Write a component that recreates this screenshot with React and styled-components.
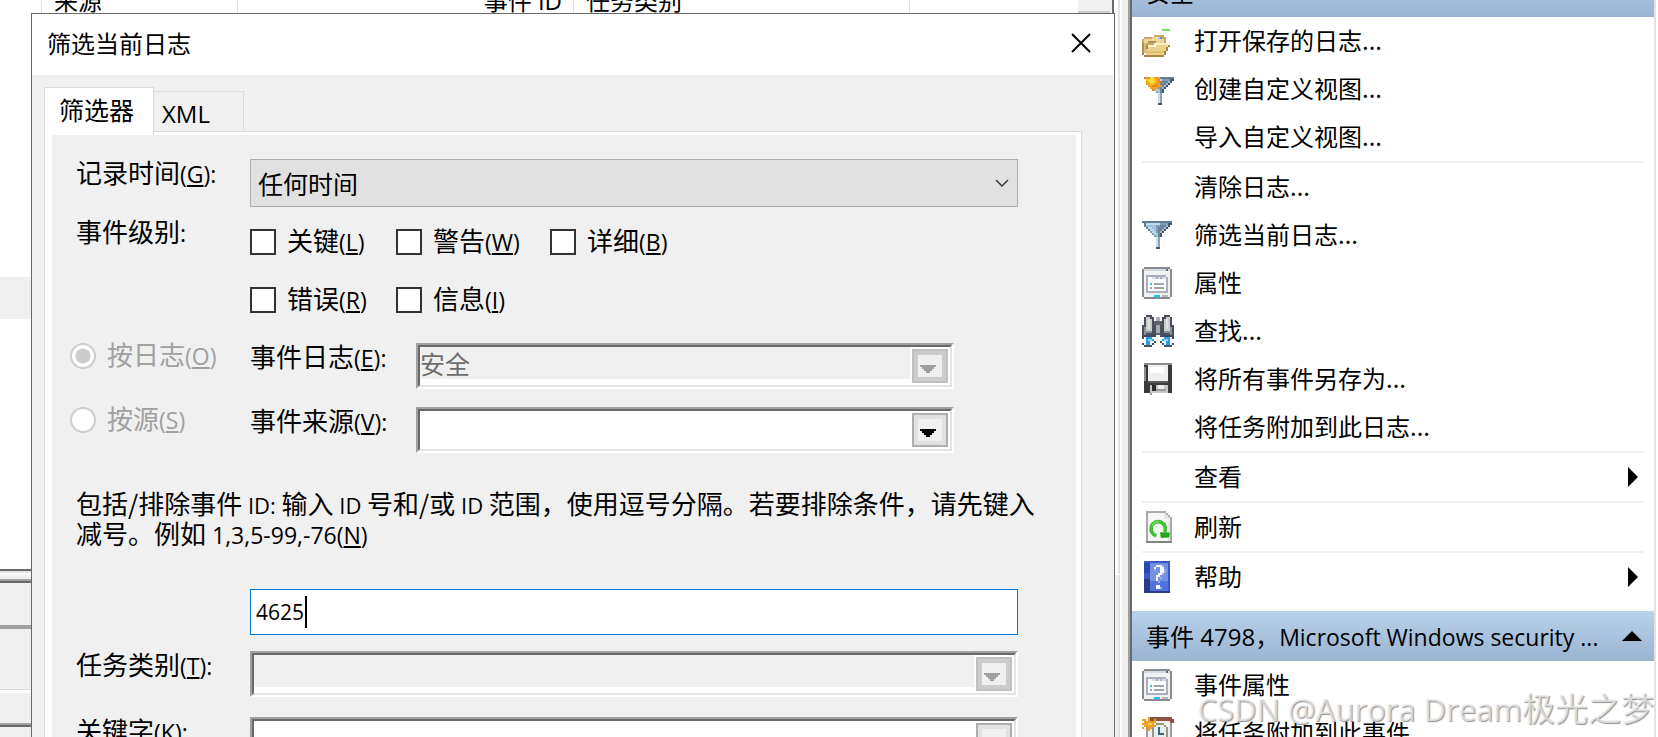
import React from "react";
import styled, { createGlobalStyle, css } from "styled-components";

const GlobalStyle = createGlobalStyle`
  * { box-sizing: border-box; }
  body {
    margin: 0;
    background: #f0f0f0;
    color: #000;
    font-family: "Noto Sans CJK SC", "Open Sans", sans-serif;
    font-size: 24px;
    line-height: 30px;
  }
  button, input, select { font: inherit; color: inherit; border-radius: 0; }
`;

/* ---------- desktop ---------- */

const Desktop = styled.div`
  position: relative;
  display: flex;
  height: 100vh;
  overflow: hidden;
`;

const MainPane = styled.main`
  position: relative;
  flex: 1;
  min-width: 0;
  display: flex;
  flex-direction: column;
  border-right: 2px solid #fff;
`;

const ListPane = styled.section`
  flex: 1;
  min-height: 0;
  overflow: hidden;
  display: flex;
  background: #fff;
  border-right: 2px solid #e3e3e3;
  border-bottom: 2px solid #fff;
`;

const ListFrame = styled.div`
  flex: 1;
  min-width: 0;
  display: flex;
  margin-right: 4px;
  overflow: hidden;
  border-right: 2px solid #696969;
  border-bottom: 2px solid #696969;
  box-shadow: 0 2px 0 #e3e3e3;
  margin-bottom: 2px;
`;

const ListBody = styled.div`
  flex: 1;
  min-width: 0;
`;

const ListHeader = styled.div`
  display: flex;
  height: 44px;
  margin-top: -19px;
`;

const HeaderCell = styled.div`
  width: ${(p) => p.$width}px;
  height: 44px;
  line-height: 37px;
  padding: 0 11px 0 12px;
  border-right: 1px solid #e0e0e0;
  text-align: ${(p) => p.$align || "left"};
  white-space: nowrap;
`;

const ListRow = styled.div`
  height: 42px;
  background: ${(p) => (p.$selected ? "#f0f0f0" : "#fff")};
`;

const ListScroll = styled.div`
  width: 34px;
  padding: 11px 2px 0 0;
  background: #f0f0f0;
`;

const ListThumb = styled.div`
  height: 160px;
  background: #cdcdcd;
`;

const DetailPane = styled.section`
  flex: 0 0 162px;
  overflow: hidden;
  padding: 4px 3px 0 0;
  background: #f0f0f0;
  border-right: 2px solid #e3e3e3;
`;

const DetailHeader = styled.div`
  height: 50px;
  border-top: 2px solid #a0a0a0;
  border-bottom: 4px solid #a0a0a0;
  box-shadow: inset 0 2px 0 #696969;
`;

const DetailTabs = styled.div`
  height: 64px;
  margin-bottom: 30px;
  border-bottom: 3px solid #fff;
  box-shadow: inset 0 -1px 0 #dcdcdc;
`;

const DetailBody = styled.div`
  height: 60px;
  border-top: 2px solid #a0a0a0;
  box-shadow: inset 0 2px 0 #696969;
`;

/* ---------- dialog ---------- */

const Dialog = styled.section`
  position: absolute;
  top: 13px;
  left: 31px;
  right: 5px;
  height: 900px;
  background: #f0f0f0;
  border: 1px solid #696969;
`;

const TitleBar = styled.header`
  display: flex;
  align-items: center;
  justify-content: space-between;
  height: 61px;
  padding: 0 17px 4px 15px;
  background: #fff;
`;

const Title = styled.h1`
  margin: 0;
  font-size: 24px;
  font-weight: 400;
`;

const CloseButton = styled.button`
  display: flex;
  padding: 6px;
  border: 0;
  background: none;
`;

const DialogBody = styled.div`
  padding: 12px 32px 0 12px;
`;

const Tabs = styled.div`
  display: flex;
  align-items: flex-end;
`;

const Tab = styled.button`
  border: 1px solid #dadada;
  border-bottom: 0;
  text-align: left;
  ${(p) =>
    p.$active
      ? css`
          width: 110px;
          height: 48px;
          margin-bottom: -4px;
          padding: 0 0 6px 14px;
          font-size: 25px;
          position: relative;
          background: #fff;
        `
      : css`
          width: 90px;
          height: 40px;
          padding: 4px 0 0 8px;
          border-left: 0;
          font-family: "Open Sans", sans-serif;
          background: #f0f0f0;
        `}
`;

const TabPage = styled.div`
  height: 800px;
  padding: 3px 5px 0 7px;
  border: 1px solid #dadada;
  background: #fff;
`;

const Form = styled.form`
  display: flex;
  flex-direction: column;
  height: 760px;
  padding: 24px 58px 0 18px;
  background: #f0f0f0;
  font-size: 26px;
`;

const Latin = styled.span`
  font-family: "Open Sans", sans-serif;
  font-size: ${(p) => p.$size || 23}px;
  line-height: 1;
`;

const FormRow = styled.div`
  display: flex;
  align-items: flex-start;
  margin-top: ${(p) => p.$gap || 0}px;
`;

const FieldLabel = styled.label`
  flex: 0 0 180px;
  padding-left: 6px;
  line-height: 26px;
  white-space: nowrap;
`;

const InnerLabel = styled.label`
  flex: 0 0 166px;
  line-height: 26px;
  white-space: nowrap;
`;

const TimeField = styled.div`
  display: grid;
  flex: 1;
  align-items: center;
  height: 48px;
  border: 1px solid #adadad;
  background: #e1e1e1;

  > * { grid-area: 1 / 1; }
  > svg { justify-self: end; margin-right: 8px; pointer-events: none; }
`;

const TimeSelect = styled.select`
  appearance: none;
  width: 100%;
  height: 46px;
  padding: 0 40px 0 7px;
  border: 0;
  outline: 0;
  background: transparent;
  font-size: 25px;
`;

const CheckGrid = styled.div`
  display: grid;
  grid-template-columns: 146px 154px auto;
  grid-auto-rows: 26px;
  row-gap: 32px;
  padding-top: 11px;
`;

const CheckLabel = styled.label`
  display: flex;
  align-items: flex-start;
  gap: 11px;
  line-height: 22px;
  white-space: nowrap;
`;

const CheckBox = styled.input`
  appearance: none;
  width: 26px;
  height: 26px;
  margin: 0;
  border: 2px solid #333;
  background: #fff;
`;

const RadioLabel = styled.label`
  display: flex;
  align-items: flex-start;
  flex: 0 0 180px;
  gap: 11px;
  height: 26px;
  line-height: 22px;
  color: #a0a0a0;
  white-space: nowrap;
`;

const Radio = styled.input`
  appearance: none;
  width: 26px;
  height: 26px;
  margin: 0;
  border: 2px solid #ccc;
  border-radius: 50%;
  background: #fff;

  &:checked { background: radial-gradient(circle, #ccc 7px, #fff 8px); }
`;

const ComboOuter = styled.div`
  display: flex;
  flex: 1;
  height: 46px;
  margin-right: ${(p) => p.$inset || 0}px;
  border: 2px solid #fff;
  border-top-color: #a0a0a0;
  border-left-color: #a0a0a0;
`;

const ComboInner = styled.div`
  display: flex;
  flex: 1;
  align-items: flex-start;
  padding: 0 2px 2px 0;
  border: 2px solid #e3e3e3;
  border-top-color: #696969;
  border-left-color: #696969;
  background: #fff;
`;

const ComboSelect = styled.select`
  appearance: none;
  flex: 1;
  height: 32px;
  margin-right: 2px;
  padding: 0;
  border: 0;
  outline: 0;
  background: #fff;
  font-size: 25px;
  line-height: 32px;

  &:disabled { background: #f0f0f0; color: #6d6d6d; opacity: 1; }
`;

const DropButton = styled.button`
  display: flex;
  align-items: flex-end;
  width: 36px;
  height: 34px;
  margin-top: 2px;
  padding: 0 0 8px 6px;
  border: 2px solid #adadad;
  outline: 4px solid #e1e1e1;
  outline-offset: -6px;
  background: #f0f0f0;

  &:disabled { border-color: #bfbfbf; outline-color: #ccc; }
`;

const Note = styled.p`
  margin: 35px 0 41px;
  padding-left: 6px;
  white-space: nowrap;
`;

const IdField = styled.div`
  display: flex;
  align-items: center;
  height: 46px;
  margin-left: 180px;
  padding: 0 5px;
  border: 1px solid #0078d7;
  background: #fff;
`;

const IdInput = styled.input`
  width: 49px;
  padding: 0;
  border: 0;
  outline: 0;
  background: transparent;
  font-family: "Open Sans", sans-serif;
  font-size: 21px;
`;

const Caret = styled.span`
  width: 2px;
  height: 32px;
  background: #000;
`;

/* ---------- actions pane ---------- */

const Splitter = styled.div`
  flex: 0 0 6px;
  background: #f0f0f0;
`;

const ActionsFrame = styled.aside`
  flex: 0 0 530px;
  border-left: 2px solid #a0a0a0;
  border-right: 2px solid #fff;
`;

const Actions = styled.div`
  height: 100%;
  overflow: hidden;
  border-left: 2px solid #696969;
  border-right: 2px solid #e3e3e3;
  background: #fff;
`;

const GroupHeader = styled.h2`
  display: flex;
  align-items: center;
  justify-content: space-between;
  height: 50px;
  margin: ${(p) => (p.$first ? "-33px" : "10px")} 0 0;
  padding: 0 12px 0 14px;
  background: linear-gradient(#b9d1ea, #99b4d1);
  font-size: 24px;
  font-weight: 400;
  white-space: nowrap;
`;

const ActionButton = styled.button`
  display: flex;
  align-items: center;
  width: 100%;
  height: 48px;
  padding: 0 16px 0 10px;
  border: 0;
  background: none;
  text-align: left;
  white-space: nowrap;
`;

const IconSlot = styled.span`
  display: flex;
  flex: 0 0 52px;
`;

const ActionText = styled.span`
  flex: 1;
  padding-bottom: 2px;
`;

const Rule = styled.hr`
  height: 2px;
  margin: 0 10px;
  border: 0;
  background: #f0f0f0;
`;

const Watermark = styled.div`
  position: absolute;
  right: 4px;
  bottom: 8px;
  color: rgba(236, 236, 236, 0.75);
  font-size: 33px;
  line-height: 44px;
  text-shadow: 1px 1px 1px rgba(120, 120, 120, 0.8);
  white-space: nowrap;
  pointer-events: none;
`;

/* ---------- icons, each on a 16 x 16 grid ---------- */

const Icon = ({ children }) => (
  <svg width="32" height="32" viewBox="0 0 16 16" shapeRendering="crispEdges" aria-hidden="true">
    {children}
  </svg>
);

const FolderIcon = () => (
  <Icon>
    <path fill="#72e85c" d="M10 2h4v1h-4z" />
    <path fill="#c9a96a" d="M6 5h5v1h1v4H0V7h1V6h5z" />
    <path fill="#ecd596" d="M1 7h4V6h5v1h1v2H1z" />
    <path fill="#f6e7bb" d="M7 6h2v1H7z" />
    <path fill="#4b93e0" d="M9 6h1v1H9z" />
    <path fill="#9fd0f2" d="M8 6h1v1H8z" />
    <path fill="#b38f4d" d="M0 9h1v6H0zM3 8h4v1H3z" />
    <path fill="#d9bd78" d="M1 9h1v5H1z" />
    <path fill="#fbeec6" d="M3 10h3V9h7v1h-7v1H3z" />
    <path fill="#edd28d" d="M3 11h4v-1h6v1h-1v2h-1v2H2v-3h1z" />
    <path fill="#dfbd6c" d="M3 13h8v1H2v-1z" />
    <path fill="#a98543" d="M1 15h10v1H1zM11 13h1v2h-1zM12 11h1v2h-1zM13 10h1v1h-1zM2 10h1v2H2z" />
  </Icon>
);

const FunnelShape = () => (
  <>
    <path fill="#7f9db3" d="M0 0h15v2h-1v1h-1v1h-1v1h-1v1h-1v2H9v6H7V8H6V7H5V6H4V5H3V4H2V3H1V1H0z" />
    <path fill="#5f7d94" d="M0 0h15v1H0zM1 1h1v2H1zM2 3h1v1H2zM3 4h1v1H3z" />
    <path fill="#c4d9e8" d="M2 1h7v1H2zM3 3h2v1H3zM4 4h2v1H4zM5 5h2v1H5zM6 6h1v1H6z" />
    <path fill="#9fc3de" d="M2 2h5v1H2zM5 3h2v1H5zM6 4h1v1H6zM7 6h1v2H7z" />
    <path fill="#69859b" d="M9 2h3v1H9zM8 3h3v1H8zM8 4h2v2H8zM8 6h1v2H8z" />
    <path fill="#a7b9c7" d="M12 2h1v1h-1zM11 3h1v1h-1zM10 4h1v1h-1zM9 5h1v1H9z" />
    <path fill="#43586a" d="M13 1h2v1h-2zM13 2h1v1h-1zM12 3h1v1h-1zM11 4h1v1h-1zM10 5h1v1h-1zM9 6h1v2H9zM7 13h2v1H7z" />
    <path fill="#cfdde7" d="M7 8h1v5H7z" />
    <path fill="#8aa1b3" d="M8 8h1v5H8z" />
  </>
);

const FilterIcon = () => (
  <Icon>
    <g transform="translate(0 1)"><FunnelShape /></g>
  </Icon>
);

const NewFilterIcon = () => (
  <Icon>
    <g transform="translate(1 2)"><FunnelShape /></g>
    <path fill="#f0a020" d="M1 2h8v4h1v1H8v1H7v1H5V8H4V7H3V6H2V3H1z" />
    <path fill="#ffc928" d="M2 3h5v2H6v1H4V5H3V4H2z" />
    <path fill="#ffdf3c" d="M4 2h2v3H4z" />
    <path fill="#f58a12" d="M8 3h1v2H8zM5 6h3v1H5zM3 2h1v1H3z" />
    <path fill="#b8894e" d="M1 2h1v1H1zM9 4h1v1H9zM5 8h1v1H5z" />
  </Icon>
);

const PropertiesIcon = () => (
  <Icon>
    <path fill="#858b90" d="M1 0h13v1h1v14h-1v1H1v-1H0V1h1z" />
    <path fill="#f1f3f3" d="M1 1h13v14H1z" />
    <path fill="#d6dade" d="M1 1h13v1H1z" />
    <path fill="#4d6e90" d="M12 1h1v1h-1z" />
    <path fill="#a9aec0" d="M2 4h10v1h1v8H2z" />
    <path fill="#fdfdff" d="M3 5h2v1h7v6H3z" />
    <path fill="#d9dce6" d="M5 5h2v1H5zM8 5h1v1H8zM10 5h2v1h-2z" />
    <path fill="#9fa5aa" d="M6 8h5v1H6zM6 10h5v1H6zM4 10h1v1H4z" />
    <path fill="#18c8f8" d="M4 8h1v1H4zM6 14h3v1H6z" />
    <path fill="#b5b7b9" d="M10 14h3v1h-3z" />
  </Icon>
);

const Barrel = () => (
  <>
    <path fill="#4b4f5c" d="M2 0h3v1h1v4h1v6H6v1H1v-1H0V5h1V1h1z" />
    <path fill="#c9cdcb" d="M2 1h2v1h1v6H2z" />
    <path fill="#e1e3de" d="M3 2h1v5H3z" />
    <path fill="#8c8f94" d="M1 6h1v4H1zM2 8h3v1H2z" />
    <path fill="#3c4a63" d="M1 10h5v1H1z" />
    <path fill="#eaf7fd" d="M1 11h5v4H1z" />
    <path fill="#2f9be4" d="M2 11h3v1h1v1H4v2H2z" />
    <path fill="#8ad7f6" d="M3 12h2v1H3z" />
    <path fill="#4b4f5c" d="M0 11h1v1H0zM0 14h1v1h1v1H1v-1H0zM2 15h3v1H2zM5 14h1v1H5zM6 13h1v1H6z" />
  </>
);

const FindIcon = () => (
  <Icon>
    <path fill="#5d616c" d="M6 3h4v7H6z" />
    <path fill="#a9adb0" d="M7 1h2v2H7zM7 5h2v4H7z" />
    <Barrel />
    <g transform="matrix(-1 0 0 1 16 0)"><Barrel /></g>
  </Icon>
);

const SaveIcon = () => (
  <Icon>
    <path fill="#3a3a3a" d="M1 0h14v15H1z" />
    <path fill="#8c8c8c" d="M1 0h14v1H1zM1 2h1v7H1z" />
    <path fill="#eef0f1" d="M3 1h10v8H3z" />
    <path fill="#fff" d="M4 2h7v3H4z" />
    <path fill="#5c5c5c" d="M3 9h10v1H3z" />
    <path fill="#c8c8c8" d="M4 11h9v4H4z" />
    <path fill="#ededed" d="M8 11h3v2H8z" />
    <path fill="#2c2c2c" d="M5 11h2v3H5z" />
    <path fill="#9a9a9a" d="M7 13h5v1H7zM4 15h1v1H4z" />
  </Icon>
);

const RefreshIcon = () => (
  <Icon>
    <path fill="#a9a9a9" d="M2 0h10v1h1v1h1v1h1v13H2z" />
    <path fill="#f6f6f6" d="M3 1h8v3h3v11H3z" />
    <path fill="#e4e4e4" d="M11 1h1v1h1v1h1v1h-3zM13 5h1v10h-1z" />
    <path fill="#838383" d="M2 15h13v1H2z" />
    <g shapeRendering="auto">
      <path fill="none" stroke="#3cc232" strokeWidth="1.8" d="M7.2 12.4A3.6 3.6 0 1 1 11.3 10.6" />
      <path fill="#1fae1a" d="M9 10.6l5 .2-.4 2.4-4.2.3z" />
      <path fill="none" stroke="#8ae27e" strokeWidth=".6" d="M5.2 7.2A3.6 3.6 0 0 1 8.6 5.4" />
    </g>
  </Icon>
);

const HelpIcon = () => (
  <Icon>
    <path fill="#3858c4" d="M1 0h13v16H1z" />
    <path fill="#2a48b0" d="M1 1h3v5H1z" />
    <path fill="#273a83" d="M1 9h3v7H1zM4 15h10v1H4z" />
    <path fill="#7290e6" d="M4 1h9v9H4z" />
    <path fill="#4f72dc" d="M4 10h9v5H4z" />
    <path fill="#f7f9ff" d="M6 3h1V2h3v1h1v3h-1v1H9v1H8v2H7V7h1V6h1V3H7v1H6zM7 12h2v2H7z" />
    <path fill="#a5afd0" d="M10 2h1v1h-1zM11 4h1v2h-1v1h-1V6h1zM9 8h1v1H9zM8 10h1v1H8zM6 4h1v1H6zM9 13h1v1H9z" />
  </Icon>
);

const TaskIcon = () => (
  <Icon>
    <path fill="#8d5344" d="M3 0h12v1h1v2H3z" />
    <path fill="#9c9c9c" d="M2 3h13v13H2z" />
    <path fill="#efefec" d="M3 2h11v14H3z" />
    <path fill="#9a9480" d="M7 3h4v1h1v1h1v6h-1v1H5V5h1V4h1z" />
    <path fill="#e3f1f4" d="M7 4h4v1h1v6H6V5h1z" />
    <path fill="#46606e" d="M8 5h1v3h2v1H8z" />
    <path fill="#f0a020" d="M3 0h1v2h2V1h1v2H6v1h1v1H5v1H4v1H3V5H1v1H0V5h1V4H0V3h1V2H0V1h2v1h1z" />
    <path fill="#ffd25a" d="M3 3h2v1H3z" />
  </Icon>
);

const RightArrow = () => (
  <svg width="10" height="20" viewBox="0 0 10 20" aria-hidden="true">
    <path d="M0 0l10 10L0 20z" />
  </svg>
);

const UpArrow = () => (
  <svg width="20" height="10" viewBox="0 0 20 10" aria-hidden="true">
    <path d="M10 0l10 10H0z" />
  </svg>
);

const DropArrow = ({ color }) => (
  <svg width="16" height="8" viewBox="0 0 8 4" shapeRendering="crispEdges" aria-hidden="true">
    <path fill={color} d="M0 0h8v1H7v1H6v1H5v1H3V3H2V2H1V1H0z" />
  </svg>
);

/* ---------- composed parts ---------- */

const KeyText = ({ text, k, colon }) => (
  <span>
    {text}
    <Latin>
      ({<u>{k}</u>}){colon && ":"}
    </Latin>
  </span>
);

const Combo = ({ id, value = "", disabled, buttonDisabled = disabled, inset }) => (
  <ComboOuter $inset={inset}>
    <ComboInner>
      <ComboSelect id={id} disabled={disabled} defaultValue={value}>
        <option value={value}>{value}</option>
      </ComboSelect>
      <DropButton type="button" tabIndex={-1} aria-label="展开" disabled={buttonDisabled}>
        <DropArrow color={buttonDisabled ? "#a0a0a0" : "#000"} />
      </DropButton>
    </ComboInner>
  </ComboOuter>
);

const Check = ({ text, k }) => (
  <CheckLabel>
    <CheckBox type="checkbox" />
    <KeyText text={text} k={k} />
  </CheckLabel>
);

const Action = ({ icon: Glyph, submenu, children }) => (
  <ActionButton type="button">
    <IconSlot>{Glyph && <Glyph />}</IconSlot>
    <ActionText>{children}</ActionText>
    {submenu && <RightArrow />}
  </ActionButton>
);

const FilterDialog = () => (
  <Dialog role="dialog" aria-labelledby="dialog-title">
    <TitleBar>
      <Title id="dialog-title">筛选当前日志</Title>
      <CloseButton type="button" aria-label="关闭">
        <svg width="20" height="20" viewBox="0 0 20 20" fill="none" stroke="#000" strokeWidth="2">
          <path d="M1 1l18 18M19 1L1 19" />
        </svg>
      </CloseButton>
    </TitleBar>
    <DialogBody>
      <Tabs role="tablist">
        <Tab type="button" role="tab" aria-selected="true" $active>筛选器</Tab>
        <Tab type="button" role="tab" aria-selected="false">XML</Tab>
      </Tabs>
      <TabPage>
        <Form>
          <FormRow>
            <FieldLabel htmlFor="logged"><KeyText text="记录时间" k="G" colon /></FieldLabel>
            <TimeField>
              <TimeSelect id="logged" defaultValue="any">
                <option value="any">任何时间</option>
              </TimeSelect>
              <svg width="14" height="8" viewBox="0 0 14 8" fill="none" stroke="#333" strokeWidth="1.4" aria-hidden="true">
                <path d="M1 1l6 6 6-6" />
              </svg>
            </TimeField>
          </FormRow>
          <FormRow $gap={11}>
            <FieldLabel as="span">事件级别<Latin>:</Latin></FieldLabel>
            <CheckGrid>
              <Check text="关键" k="L" />
              <Check text="警告" k="W" />
              <Check text="详细" k="B" />
              <Check text="错误" k="R" />
              <Check text="信息" k="I" />
            </CheckGrid>
          </FormRow>
          <FormRow $gap={30}>
            <RadioLabel>
              <Radio type="radio" name="by" defaultChecked disabled />
              <KeyText text="按日志" k="O" />
            </RadioLabel>
            <InnerLabel htmlFor="log"><KeyText text="事件日志" k="E" colon /></InnerLabel>
            <Combo id="log" value="安全" disabled inset={64} />
          </FormRow>
          <FormRow $gap={18}>
            <RadioLabel>
              <Radio type="radio" name="by" disabled />
              <KeyText text="按源" k="S" />
            </RadioLabel>
            <InnerLabel htmlFor="source"><KeyText text="事件来源" k="V" colon /></InnerLabel>
            <Combo id="source" inset={64} />
          </FormRow>
          <Note id="id-note">
            包括/排除事件<Latin $size={22}> ID: </Latin>输入<Latin $size={22}> ID </Latin>号和/或<Latin $size={22}> ID </Latin>范围，使用逗号分隔。若要排除条件，请先键入
            <br />
            减号。例如<Latin> 1,3,5-99,-76(<u>N</u>)</Latin>
          </Note>
          <IdField>
            <IdInput type="text" defaultValue="4625" aria-labelledby="id-note" />
            <Caret />
          </IdField>
          <FormRow $gap={16}>
            <FieldLabel htmlFor="task"><KeyText text="任务类别" k="T" colon /></FieldLabel>
            <Combo id="task" disabled />
          </FormRow>
          <FormRow $gap={20}>
            <FieldLabel htmlFor="keywords"><KeyText text="关键字" k="K" colon /></FieldLabel>
            <Combo id="keywords" />
          </FormRow>
        </Form>
      </TabPage>
    </DialogBody>
  </Dialog>
);

const App = () => (
  <>
    <GlobalStyle />
    <Desktop>
      <MainPane>
        <ListPane>
          <ListFrame>
            <ListBody>
              <ListHeader>
                <HeaderCell $width={42} />
                <HeaderCell $width={196}>来源</HeaderCell>
                <HeaderCell $width={336} $align="right">事件<Latin $size={24}> ID</Latin></HeaderCell>
                <HeaderCell $width={336}>任务类别</HeaderCell>
              </ListHeader>
              {[0, 1, 2, 3, 4, 5, 6].map((n) => (
                <ListRow key={n} $selected={n === 6} />
              ))}
            </ListBody>
            <ListScroll><ListThumb /></ListScroll>
          </ListFrame>
        </ListPane>
        <DetailPane>
          <DetailHeader />
          <DetailTabs />
          <DetailBody />
        </DetailPane>
        <FilterDialog />
      </MainPane>
      <Splitter />
      <ActionsFrame>
        <Actions>
          <GroupHeader $first>安全</GroupHeader>
          <Action icon={FolderIcon}>打开保存的日志...</Action>
          <Action icon={NewFilterIcon}>创建自定义视图...</Action>
          <Action>导入自定义视图...</Action>
          <Rule />
          <Action>清除日志...</Action>
          <Action icon={FilterIcon}>筛选当前日志...</Action>
          <Action icon={PropertiesIcon}>属性</Action>
          <Action icon={FindIcon}>查找...</Action>
          <Action icon={SaveIcon}>将所有事件另存为...</Action>
          <Action>将任务附加到此日志...</Action>
          <Rule />
          <Action submenu>查看</Action>
          <Rule />
          <Action icon={RefreshIcon}>刷新</Action>
          <Rule />
          <Action icon={HelpIcon} submenu>帮助</Action>
          <GroupHeader>
            <span>事件<Latin $size={24}> 4798</Latin>，<Latin>Microsoft Windows security ...</Latin></span>
            <UpArrow />
          </GroupHeader>
          <Action icon={PropertiesIcon}>事件属性</Action>
          <Action icon={TaskIcon}>将任务附加到此事件...</Action>
        </Actions>
      </ActionsFrame>
      <Watermark><Latin $size={31}>CSDN @Aurora Dream</Latin>极光之梦</Watermark>
    </Desktop>
  </>
);

export default App;
